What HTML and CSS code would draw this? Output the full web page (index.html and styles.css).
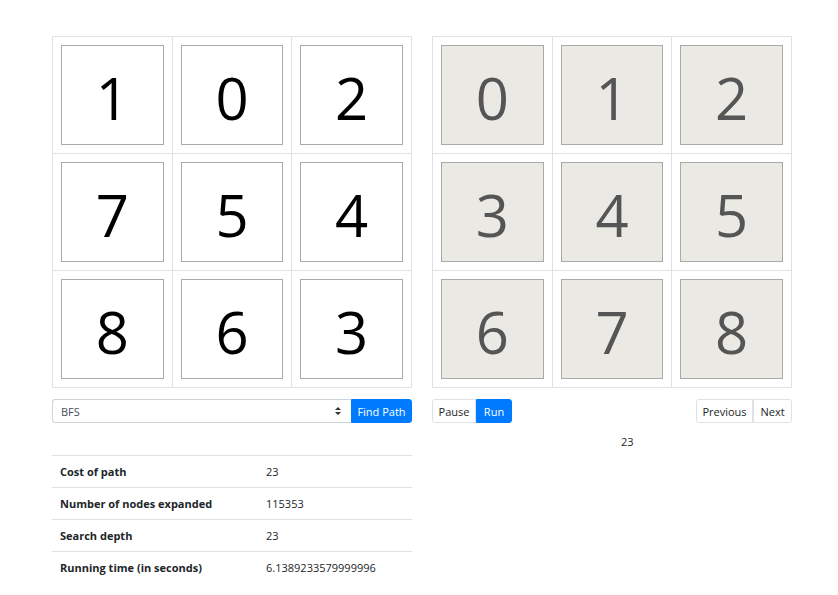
FILE: index.html
```html
<!DOCTYPE html>
<html>
<head>
<meta charset="utf-8">
<link rel="stylesheet" href="styles.css">
</head>
<body>
<div class="page">
  <div class="col">
    <table class="board">
      <tr><td><div class="tile">1</div></td><td><div class="tile">0</div></td><td><div class="tile">2</div></td></tr>
      <tr><td><div class="tile">7</div></td><td><div class="tile">5</div></td><td><div class="tile">4</div></td></tr>
      <tr><td><div class="tile">8</div></td><td><div class="tile">6</div></td><td><div class="tile">3</div></td></tr>
    </table>
    <div class="controls">
      <div class="select">
        <span>BFS</span>
        <svg class="arrows" width="8" height="10" viewBox="0 0 8 10"><path d="M4 1 L7 4 L1 4 Z M4 9 L7 6 L1 6 Z" fill="#333"/></svg>
      </div>
      <button class="btn primary find">Find Path</button>
    </div>
    <table class="stats">
      <tr><th>Cost of path</th><td>23</td></tr>
      <tr><th>Number of nodes expanded</th><td>115353</td></tr>
      <tr><th>Search depth</th><td>23</td></tr>
      <tr><th>Running time (in seconds)</th><td>6.1389233579999996</td></tr>
    </table>
  </div>
  <div class="col">
    <table class="board goal">
      <tr><td><div class="tile">0</div></td><td><div class="tile">1</div></td><td><div class="tile">2</div></td></tr>
      <tr><td><div class="tile">3</div></td><td><div class="tile">4</div></td><td><div class="tile">5</div></td></tr>
      <tr><td><div class="tile">6</div></td><td><div class="tile">7</div></td><td><div class="tile">8</div></td></tr>
    </table>
    <div class="controls between">
      <div class="group">
        <button class="btn light first w-pause">Pause</button><button class="btn primary last w-run">Run</button>
      </div>
      <div class="group">
        <button class="btn light first w-prev">Previous</button><button class="btn light last w-next">Next</button>
      </div>
    </div>
    <div class="step">23</div>
  </div>
</div>
</body>
</html>
```

FILE: styles.css
```css
* { box-sizing: border-box; }
body {
  margin: 0;
  font-family: "Open Sans", "Noto Sans", sans-serif;
  color: #212529;
  background: #fff;
}
.page {
  display: flex;
  gap: 20px;
  padding: 36px 0 0 52px;
}
.col {
  width: 360px;
}
.board {
  border-collapse: collapse;
  width: 360px;
}
.board td {
  border: 1px solid #dee2e6;
  padding: 8px;
  width: 120px;
}
.tile {
  height: 100px;
  border: 1px solid #aaa;
  background: #fff;
  color: #000;
  font-family: "Open Sans", sans-serif;
  font-size: 58px;
  display: flex;
  align-items: center;
  justify-content: center;
  padding-top: 4px;
}
.goal .tile {
  background: #eae9e3;
  color: #555;
}
.controls {
  display: flex;
  margin-top: 11px;
  height: 24px;
}
.controls.between {
  justify-content: space-between;
}
.select {
  flex: 1;
  border: 1px solid #ced4da;
  border-right: none;
  border-radius: 3px 0 0 3px;
  display: flex;
  align-items: center;
  justify-content: space-between;
  padding: 0 9px 0 8px;
  font-size: 11px;
  color: #495057;
}
.btn {
  font-family: inherit;
  font-size: 11px;
  height: 24px;
  border: 1px solid transparent;
  padding: 0;
  margin: 0;
  line-height: 1;
  text-align: center;
}
.w-pause { width: 44px; }
.w-run { width: 36px; }
.w-prev { width: 57px; }
.w-next { width: 39px; }
.primary {
  background: #007bff;
  border-color: #007bff;
  color: #fff;
}
.find {
  border-radius: 0 3px 3px 0;
  width: 61px;
}
.light {
  background: #fff;
  border-color: #dee2e6;
  color: #212529;
}
.group {
  display: flex;
}
.first { border-radius: 3px 0 0 3px; }
.last { border-radius: 0 3px 3px 0; }
.step {
  font-size: 11px;
  margin-top: 11px;
  padding-left: 189px;
}
.stats {
  border-collapse: collapse;
  width: 360px;
  margin-top: 32px;
  font-size: 11px;
}
.stats th, .stats td {
  border-top: 1px solid #dee2e6;
  text-align: left;
  padding: 0 8px;
  height: 32px;
}
.stats th {
  font-weight: 700;
  width: 206px;
}
```
